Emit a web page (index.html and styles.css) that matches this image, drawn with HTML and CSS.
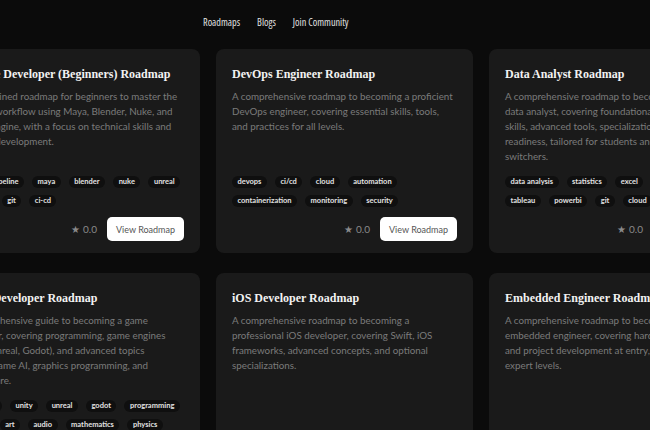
FILE: index.html
```html
<!DOCTYPE html>
<html>
<head>
<meta charset="utf-8">
<link rel="stylesheet" href="styles.css">
</head>
<body>
<header class="nav">
  <a href="#">Roadmaps</a>
  <a href="#">Blogs</a>
  <a href="#">Join Community</a>
</header>
<main class="grid">
  <article class="card">
    <h2 class="title">Pipeline Developer (Beginners) Roadmap</h2>
    <p class="desc">A streamlined roadmap for beginners to master the pipeline workflow using Maya, Blender, Nuke, and Unreal Engine, with a focus on technical skills and pipeline development.</p>
    <div class="tags">
      <span class="tag">3d</span><span class="tag">pipeline</span><span class="tag">maya</span><span class="tag">blender</span><span class="tag">nuke</span><span class="tag">unreal</span><span class="tag">python</span><span class="tag">git</span><span class="tag">ci-cd</span>
    </div>
    <div class="foot"><span class="rating">★ 0.0</span><a class="btn" href="#">View Roadmap</a></div>
  </article>
  <article class="card">
    <h2 class="title">DevOps Engineer Roadmap</h2>
    <p class="desc">A comprehensive roadmap to becoming a proficient DevOps engineer, covering essential skills, tools, and practices for all levels.</p>
    <div class="tags">
      <span class="tag">devops</span><span class="tag">ci/cd</span><span class="tag">cloud</span><span class="tag">automation</span><span class="tag">containerization</span><span class="tag">monitoring</span><span class="tag">security</span>
    </div>
    <div class="foot"><span class="rating">★ 0.0</span><a class="btn" href="#">View Roadmap</a></div>
  </article>
  <article class="card">
    <h2 class="title">Data Analyst Roadmap</h2>
    <p class="desc">A comprehensive roadmap to becoming a skilled data analyst, covering foundational skills,&nbsp;advanced&nbsp;tools, specializations, and career readiness,&nbsp;tailored for students and career switchers.</p>
    <div class="tags">
      <span class="tag">data analysis</span><span class="tag">statistics</span><span class="tag">excel</span><span class="tag">sql</span><span class="tag">python</span><span class="tag">tableau</span><span class="tag">powerbi</span><span class="tag">git</span><span class="tag">cloud</span>
    </div>
    <div class="foot"><span class="rating">★ 0.0</span><a class="btn" href="#">View Roadmap</a></div>
  </article>
  <article class="card">
    <h2 class="title">Game Developer Roadmap</h2>
    <p class="desc">A comprehensive guide to becoming a game developer, covering programming, game engines (Unity, Unreal, Godot), and advanced topics such&nbsp;as&nbsp;game AI, graphics programming, and middleware.</p>
    <div class="tags">
      <span class="tag">game dev</span><span class="tag">unity</span><span class="tag">unreal</span><span class="tag">godot</span><span class="tag">programming</span><span class="tag">design</span><span class="tag">art</span><span class="tag">audio</span><span class="tag">mathematics</span><span class="tag">physics</span><span class="tag">networking</span><span class="tag">shaders</span>
    </div>
    <div class="foot"><span class="rating">★ 0.0</span><a class="btn" href="#">View Roadmap</a></div>
  </article>
  <article class="card">
    <h2 class="title">iOS Developer Roadmap</h2>
    <p class="desc">A comprehensive roadmap to becoming a professional iOS developer, covering Swift, iOS frameworks, advanced concepts, and optional specializations.</p>
    <div class="tags">
      <span class="tag">ios</span><span class="tag">swift</span><span class="tag">swiftui</span><span class="tag">uikit</span>
    </div>
    <div class="foot"><span class="rating">★ 0.0</span><a class="btn" href="#">View Roadmap</a></div>
  </article>
  <article class="card">
    <h2 class="title">Embedded Engineer Roadmap</h2>
    <p class="desc">A comprehensive roadmap to becoming an embedded engineer, covering hardware, software, and project development at entry, advanced, and expert levels.</p>
    <div class="tags">
      <span class="tag">embedded</span><span class="tag">c</span><span class="tag">rtos</span><span class="tag">hardware</span>
    </div>
    <div class="foot"><span class="rating">★ 0.0</span><a class="btn" href="#">View Roadmap</a></div>
  </article>
</main>
</body>
</html>
```
FILE: styles.css
```css
html, body {
  margin: 0;
  padding: 0;
}
body {
  background: #0b0b0b;
  width: 650px;
  height: 430px;
  overflow: hidden;
  font-family: "Lato", "Noto Sans", sans-serif;
}
.nav {
  display: flex;
  align-items: center;
  gap: 17px;
  height: 44px;
  padding-left: 203px;
}
.nav a {
  color: #e0e0e0;
  text-decoration: none;
  font-family: "Open Sans", sans-serif;
  font-stretch: 75%;
  font-size: 10.2px;
}
.grid {
  display: grid;
  grid-template-columns: repeat(3, 257px);
  grid-template-rows: 204px 223px;
  column-gap: 16px;
  row-gap: 20px;
  margin-left: -57px;
  margin-top: 5px;
}
.card {
  background: #1a1a1a;
  border-radius: 8px;
  padding: 16px 16px 12px;
  display: flex;
  flex-direction: column;
  min-width: 0;
}
.title {
  margin: 0;
  font-family: "Liberation Serif", serif;
  font-weight: bold;
  font-size: 12px;
  line-height: 18px;
  color: #f2f2f2;
}
.desc {
  margin: 6px 0 12px;
  font-size: 9.8px;
  line-height: 15px;
  color: #7b7b7b;
}
.tags {
  margin-top: auto;
  display: flex;
  flex-wrap: wrap;
  gap: 7px 8px;
}
.tag {
  background: #0f0f0f;
  color: #e2e2e2;
  font-weight: bold;
  font-size: 7.5px;
  line-height: 12px;
  padding: 0 5.5px;
  border-radius: 6px;
}
.foot {
  display: flex;
  justify-content: flex-end;
  align-items: center;
  gap: 10px;
  margin-top: 10px;
}
.rating {
  color: #8a8a8a;
  font-size: 10px;
}
.btn {
  background: #ffffff;
  color: #555555;
  text-decoration: none;
  font-size: 9px;
  width: 77px;
  height: 24px;
  display: flex;
  align-items: center;
  justify-content: center;
  border-radius: 5px;
}
```
